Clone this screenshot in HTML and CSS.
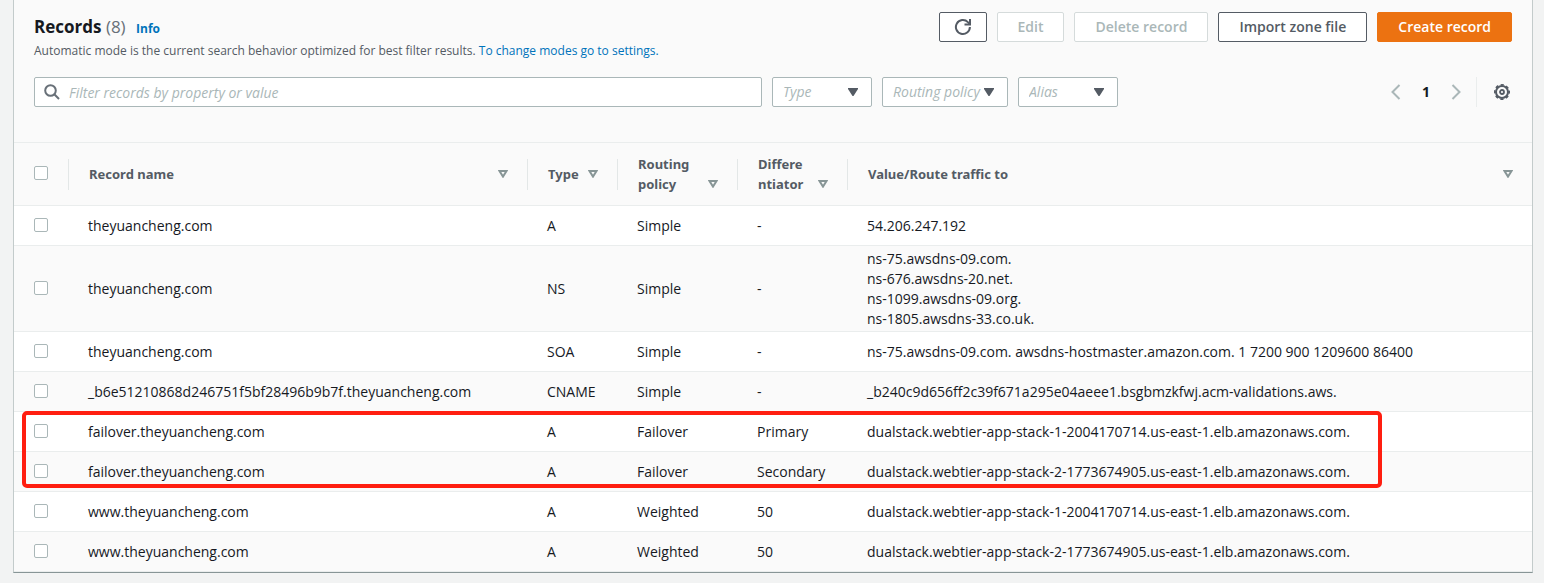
FILE: index.html
```html
<!DOCTYPE html>
<html lang="en">
<head>
<meta charset="utf-8">
<title>Records</title>
<link rel="stylesheet" href="styles.css">
</head>
<body>
<main class="panel">
  <header class="panel-head">
    <div class="title-row">
      <div class="titles">
        <h2 class="title">Records <span class="count">(8)</span> <a class="info" href="#info">Info</a></h2>
        <p class="description">Automatic mode is the current search behavior optimized for best filter results. <a href="#settings">To change modes go to settings.</a></p>
      </div>
      <div class="actions">
        <button class="btn btn-icon" type="button" aria-label="Refresh">
          <svg width="18" height="18" viewBox="0 0 18 18" fill="none" stroke="currentColor" stroke-width="2"><path d="M15.9 9a7 7 0 1 1-2-4.900l2 1.900"/><path d="M16 1v5.500h-5.500"/></svg>
        </button>
        <button class="btn" type="button" disabled>Edit</button>
        <button class="btn" type="button" disabled>Delete record</button>
        <button class="btn" type="button">Import zone file</button>
        <button class="btn btn-primary" type="button">Create record</button>
      </div>
    </div>
    <div class="tool-row">
      <div class="filters">
        <div class="search">
          <svg class="search-icon" width="16" height="16" viewBox="0 0 16 16" fill="none" stroke="currentColor" stroke-width="2"><circle cx="6.500" cy="6.500" r="5.300"/><path d="M10.300 10.300l4.700 4.700"/></svg>
          <input class="field" type="text" aria-label="Filter records" placeholder="Filter records by property or value">
        </div>
        <div class="pick">
          <select class="field" aria-label="Type"><option>Type</option></select>
          <svg class="caret" width="10" height="8" viewBox="0 0 10 8"><path d="M0 0h10v1L5.500 8h-1L0 1z" fill="currentColor"/></svg>
        </div>
        <div class="pick pick-wide">
          <select class="field" aria-label="Routing policy"><option>Routing policy</option></select>
          <svg class="caret" width="10" height="8" viewBox="0 0 10 8"><path d="M0 0h10v1L5.500 8h-1L0 1z" fill="currentColor"/></svg>
        </div>
        <div class="pick">
          <select class="field" aria-label="Alias"><option>Alias</option></select>
          <svg class="caret" width="10" height="8" viewBox="0 0 10 8"><path d="M0 0h10v1L5.500 8h-1L0 1z" fill="currentColor"/></svg>
        </div>
      </div>
      <div class="paging">
        <button class="arrow" type="button" aria-label="Previous page" disabled><svg width="10" height="16" viewBox="0 0 10 16" fill="none" stroke="currentColor" stroke-width="2"><path d="M8.500 1L1.500 8l7 7"/></svg></button>
        <button class="page" type="button">1</button>
        <button class="arrow" type="button" aria-label="Next page" disabled><svg width="10" height="16" viewBox="0 0 10 16" fill="none" stroke="currentColor" stroke-width="2"><path d="M1.500 1l7 7-7 7"/></svg></button>
        <button class="gear" type="button" aria-label="Preferences"><svg width="16" height="16" viewBox="0 0 16 16" fill="none" stroke="currentColor"><circle cx="8" cy="8" r="6" stroke-width="2"/><circle cx="8" cy="8" r="7.200" stroke-width="1.600" stroke-dasharray="3.200 2.455" stroke-dashoffset="1.600"/><circle cx="8" cy="8" r="2" stroke-width="1.800"/></svg></button>
      </div>
    </div>
  </header>
  <table class="records">
    <colgroup><col class="c-check"><col class="c-name"><col class="c-type"><col class="c-policy"><col class="c-diff"><col></colgroup>
    <thead>
      <tr>
        <th class="check"><input type="checkbox" aria-label="Select all records"></th>
        <th><div class="label"><span>Record name</span><svg class="sort" width="10" height="8" viewBox="0 0 10 8"><path d="M1.500 1h7L5 6.600z"/></svg></div></th>
        <th><div class="label"><span>Type</span><svg class="sort" width="10" height="8" viewBox="0 0 10 8"><path d="M1.500 1h7L5 6.600z"/></svg></div></th>
        <th><div class="label"><span>Routing policy</span><svg class="sort" width="10" height="8" viewBox="0 0 10 8"><path d="M1.500 1h7L5 6.600z"/></svg></div></th>
        <th><div class="label"><span>Differe<wbr>ntiator</span><svg class="sort" width="10" height="8" viewBox="0 0 10 8"><path d="M1.500 1h7L5 6.600z"/></svg></div></th>
        <th><div class="label"><span>Value/Route traffic to</span><svg class="sort" width="10" height="8" viewBox="0 0 10 8"><path d="M1.500 1h7L5 6.600z"/></svg></div></th>
      </tr>
    </thead>
    <tbody>
      <tr><td class="check"><input type="checkbox" aria-label="Select record"></td><td>theyuancheng.com</td><td>A</td><td>Simple</td><td>-</td><td>54.206.247.192</td></tr>
      <tr class="alt"><td class="check"><input type="checkbox" aria-label="Select record"></td><td>theyuancheng.com</td><td>NS</td><td>Simple</td><td>-</td><td>ns-75.awsdns-09.com.<br>ns-676.awsdns-20.net.<br>ns-1099.awsdns-09.org.<br>ns-1805.awsdns-33.co.uk.</td></tr>
      <tr><td class="check"><input type="checkbox" aria-label="Select record"></td><td>theyuancheng.com</td><td>SOA</td><td>Simple</td><td>-</td><td>ns-75.awsdns-09.com. awsdns-hostmaster.amazon.com. 1 7200 900 1209600 86400</td></tr>
      <tr class="alt"><td class="check"><input type="checkbox" aria-label="Select record"></td><td>_b6e51210868d246751f5bf28496b9b7f.theyuancheng.com</td><td>CNAME</td><td>Simple</td><td>-</td><td>_b240c9d656ff2c39f671a295e04aeee1.bsgbmzkfwj.acm-validations.aws.</td></tr>
    </tbody>
    <tbody class="marked">
      <tr><td class="check"><input type="checkbox" aria-label="Select record"><span class="marker"></span></td><td>failover.theyuancheng.com</td><td>A</td><td>Failover</td><td>Primary</td><td>dualstack.webtier-app-stack-1-2004170714.us-east-1.elb.amazonaws.com.</td></tr>
      <tr class="alt"><td class="check"><input type="checkbox" aria-label="Select record"></td><td>failover.theyuancheng.com</td><td>A</td><td>Failover</td><td>Secondary</td><td>dualstack.webtier-app-stack-2-1773674905.us-east-1.elb.amazonaws.com.</td></tr>
    </tbody>
    <tbody>
      <tr><td class="check"><input type="checkbox" aria-label="Select record"></td><td>www.theyuancheng.com</td><td>A</td><td>Weighted</td><td>50</td><td>dualstack.webtier-app-stack-1-2004170714.us-east-1.elb.amazonaws.com.</td></tr>
      <tr class="alt"><td class="check"><input type="checkbox" aria-label="Select record"></td><td>www.theyuancheng.com</td><td>A</td><td>Weighted</td><td>50</td><td>dualstack.webtier-app-stack-2-1773674905.us-east-1.elb.amazonaws.com.</td></tr>
    </tbody>
  </table>
</main>
</body>
</html>
```
FILE: styles.css
```css
* { box-sizing: border-box; }
body {
  margin: 0;
  padding: 0 11px 10px 13px;
  background: #f2f3f3;
  color: #16191f;
  font: 14px/20px "Open Sans", "Noto Sans", sans-serif;
}
a { color: #0073bb; text-decoration: none; }
button, input, select { font: inherit; color: inherit; }
svg { display: block; }

.panel {
  background: #fafafa;
  border: 1px solid #c3cbcb;
  border-width: 0 1px 1px;
  border-bottom-color: #879596;
}
.panel-head { padding: 12px 20px 35px; border-bottom: 1px solid #eaeded; }
.title-row { display: flex; justify-content: space-between; }
.title { margin: 0; padding-top: 3px; font-size: 17px; line-height: 24px; }
.count { font-weight: 400; color: #687078; }
.info { margin-left: 6px; font-size: 12px; }
.description { margin: 0; font-size: 12px; color: #545b64; }
.actions { display: flex; gap: 10px; align-items: flex-start; }
.btn {
  height: 30px;
  padding: 0 20px;
  background: #fff;
  border: 1px solid #545b64;
  border-radius: 2px;
  color: #545b64;
  font-weight: 600;
  white-space: nowrap;
}
.btn:disabled { color: #aab7b8; border-color: #d5dbdb; }
.btn-icon { padding: 0 14px; }
.btn-primary { background: #ec7211; border-color: #ec7211; color: #fff; }

.tool-row { display: flex; justify-content: space-between; margin-top: 16px; }
.filters { display: flex; gap: 10px; flex: 0 1 1084px; }
.search { position: relative; flex: 1; }
.search-icon { position: absolute; left: 10px; top: 7px; color: #687078; }
.field {
  display: block;
  width: 100%;
  height: 30px;
  padding: 0 10px;
  background: #fff;
  border: 1px solid #aab7b8;
  border-radius: 2px;
  color: #aab7b8;
  font-style: italic;
  appearance: none;
}
.search .field { padding-left: 34px; }
.field::placeholder { color: #aab7b8; opacity: 1; }
.pick { position: relative; width: 100px; }
.pick-wide { width: 126px; }
.caret { position: absolute; right: 14px; top: 11px; color: #545b64; pointer-events: none; }
.paging { display: flex; align-items: center; height: 30px; }
.arrow, .page, .gear { padding: 0; border: 0; background: none; }
.arrow { color: #aab7b8; }
.page { width: 50px; font-weight: 700; }
.gear {
  display: flex;
  align-items: center;
  justify-content: flex-end;
  width: 36px;
  height: 30px;
  margin-left: 15px;
  padding-right: 2px;
  border-left: 1px solid #eaeded;
  color: #545b64;
}

.records { width: 100%; table-layout: fixed; border-collapse: separate; border-spacing: 0; }
.c-check { width: 54px; }
.c-name { width: 459px; }
.c-type { width: 90px; }
.c-policy { width: 120px; }
.c-diff { width: 110px; }
th {
  height: 63px;
  padding: 0 19px 0 21px;
  background: linear-gradient(#e3e7e7, #e3e7e7) left center / 1px 31px no-repeat;
  border-bottom: 1px solid #eaeded;
  color: #545b64;
  font-family: "Noto Sans", "Open Sans", sans-serif;
  font-size: 13px;
  text-align: left;
}
th.check { background: none; }
.label { display: flex; align-items: flex-end; justify-content: space-between; }
.sort { flex: none; margin-bottom: 6px; fill: none; stroke: #879596; stroke-width: 2; }
td {
  height: 40px;
  padding: 3px 0 2px 20px;
  background: #fff;
  border-bottom: 1px solid #eaeded;
}
.alt td { background: #fafafa; }
.records .check { padding: 0 0 2px 20px; }
.check input {
  display: block;
  width: 14px;
  height: 14px;
  margin: 0;
  background: #fff;
  border: 1px solid #aab7b8;
  border-radius: 2px;
  appearance: none;
}
.marked { position: relative; }
.marker {
  position: absolute;
  inset: -1px 150px 4px 8px;
  border: 4px solid #ff1e10;
  border-radius: 5px;
  pointer-events: none;
}
```
